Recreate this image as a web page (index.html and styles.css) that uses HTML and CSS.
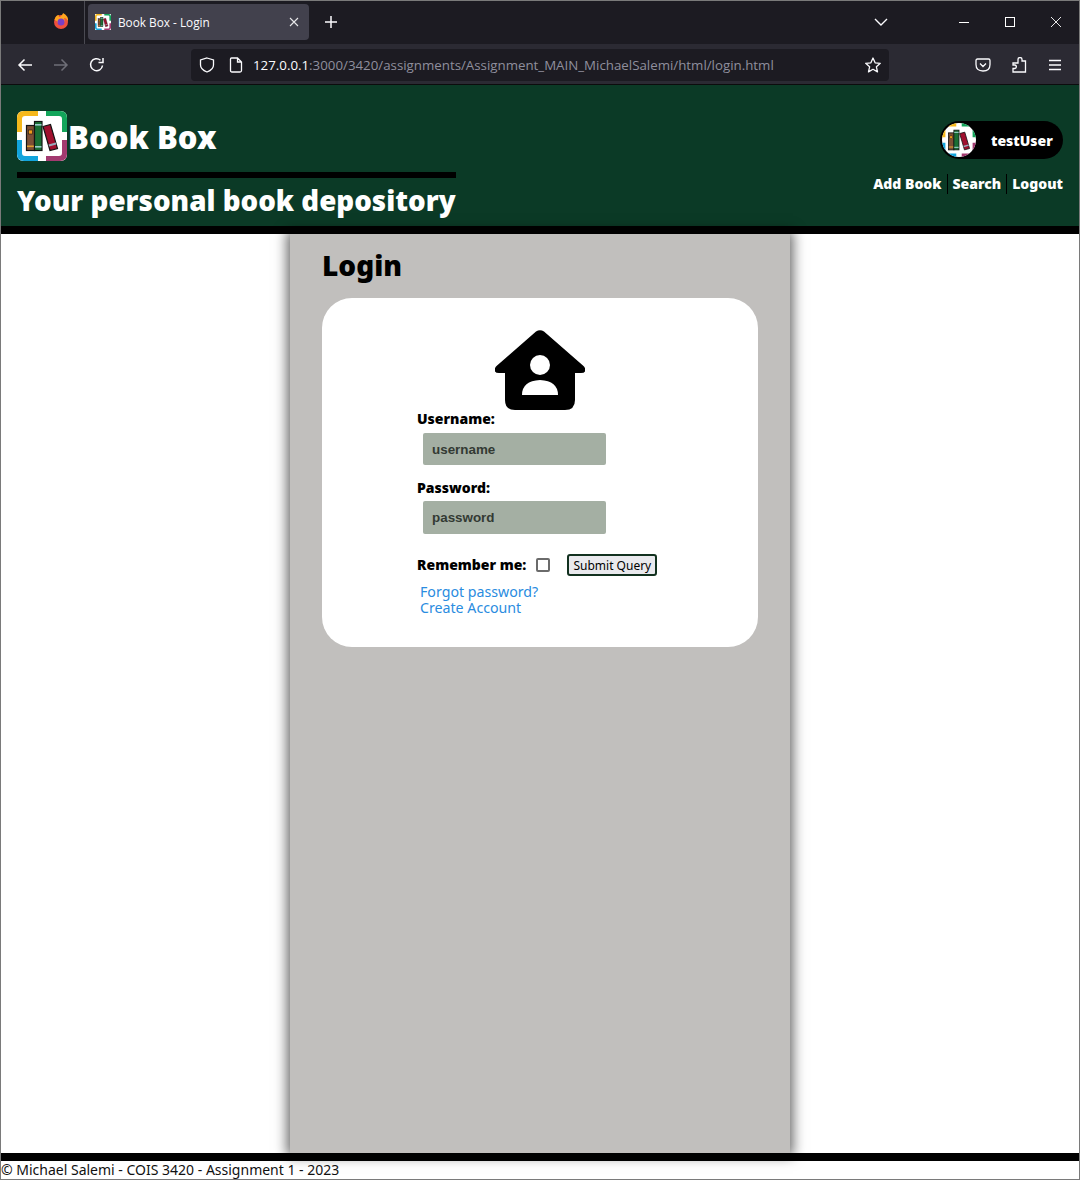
FILE: index.html
```html
<!DOCTYPE html>
<html lang="en">
<head>
  <meta charset="UTF-8">
  <meta name="viewport" content="width=device-width, initial-scale=1.0">
  <title>Book Box - Login</title>
  <link rel="stylesheet" href="styles.css">
</head>
<body>
  <svg class="defs" width="0" height="0">
    <symbol id="books" viewBox="0 0 50 50">
      <rect x="9.500" y="14.500" width="8" height="25" fill="#7d4f35" stroke="#141414" stroke-width="1.200"/>
      <rect x="11.500" y="19" width="4" height="4" fill="#f09a1a" stroke="#141414" stroke-width=".6"/>
      <rect x="10" y="34.500" width="7" height="1.600" fill="#e0a030"/>
      <rect x="17.500" y="10.500" width="7.500" height="29" fill="#1a6e34" stroke="#141414" stroke-width="1.200"/>
      <rect x="18" y="13" width="6.500" height="1.600" fill="#9cc"/>
      <rect x="18" y="35" width="6.500" height="1.600" fill="#9cc"/>
      <path d="M26 15.500 L33.500 13.500 L40.500 37.500 L33 39.500 Z" fill="#a0102e" stroke="#141414" stroke-width="1.200"/>
      <path d="M31.500 33.500 L38.800 31.500 L39.400 33.500 L32.100 35.500 Z" fill="#9ab"/>
    </symbol>
    <symbol id="colours" viewBox="0 0 50 50">
      <path d="M5 21 V8 Q5 5 8 5 H21 V0 H7 Q0 0 0 7 V21 Z" fill="#f5b81c"/>
      <path d="M29 5 H42 Q45 5 45 8 V21 H50 V7 Q50 0 43 0 H29 Z" fill="#12a55a"/>
      <path d="M5 29 V42 Q5 45 8 45 H21 V50 H7 Q0 50 0 43 V29 Z" fill="#12a4dc"/>
      <path d="M29 45 H42 Q45 45 45 42 V29 H50 V43 Q50 50 43 50 H29 Z" fill="#a33a70"/>
    </symbol>
  </svg>

  <div class="tabbar">
    <div class="tab-left">
      <svg class="ffox" viewBox="0 0 16 16" width="16" height="16">
        <circle cx="8" cy="9" r="7" fill="#f0503c"/>
        <path d="M1.500 7 Q2.500 2 6 2 Q5 4 7 4 Q10 1 10 0 Q16 3 15 9 Q14 5 11 5 Q13 9 9 11 Q5 12 4 8 Z" fill="#ffa51e"/>
        <circle cx="8" cy="9" r="3.500" fill="#7b3fc4"/>
      </svg>
    </div>
    <div class="tab">
      <svg class="tab-favicon" width="16" height="16" viewBox="0 0 50 50"><rect width="50" height="50" fill="#fff"/><use href="#colours" width="50" height="50"/><use href="#books" width="50" height="50"/></svg>
      <span class="tab-title">Book Box - Login</span>
      <svg class="icon-sm" viewBox="0 0 10 10" width="10" height="10"><path d="M1 1 L9 9 M9 1 L1 9" stroke="#e8e8ea" stroke-width="1.100"/></svg>
    </div>
    <svg class="newtab" viewBox="0 0 14 14" width="14" height="14"><path d="M7 1 V13 M1 7 H13" stroke="#fbfbfe" stroke-width="1.500"/></svg>
    <div class="spacer"></div>
    <svg class="tab-list" viewBox="0 0 14 8" width="14" height="8"><path d="M1 1 L7 7 L13 1" fill="none" stroke="#fbfbfe" stroke-width="1.400"/></svg>
    <div class="winbtn"><svg viewBox="0 0 10 10" width="10" height="10"><path d="M0 5.500 H10" stroke="#fff"/></svg></div>
    <div class="winbtn"><svg viewBox="0 0 10 10" width="10" height="10"><rect x=".5" y=".5" width="9" height="9" fill="none" stroke="#fff"/></svg></div>
    <div class="winbtn"><svg viewBox="0 0 10 10" width="10" height="10"><path d="M0 0 L10 10 M10 0 L0 10" stroke="#fff" stroke-width=".9"/></svg></div>
  </div>

  <div class="toolbar">
    <svg class="nav-first" viewBox="0 0 16 16" width="16" height="16"><path d="M15 8 H2 M7.500 2.500 L2 8 L7.500 13.500" fill="none" stroke="#fbfbfe" stroke-width="1.500"/></svg>
    <svg class="nav" viewBox="0 0 16 16" width="16" height="16"><path d="M1 8 H14 M8.500 2.500 L14 8 L8.500 13.500" fill="none" stroke="#6f6f78" stroke-width="1.500"/></svg>
    <svg class="nav" viewBox="0 0 16 16" width="16" height="16"><path d="M13.500 8.500 A6 6 0 1 1 11.500 3.200 M14 1 V5.500 H9.500" fill="none" stroke="#fbfbfe" stroke-width="1.500"/></svg>
    <div class="urlbar">
      <svg viewBox="0 0 16 16" width="16" height="16"><path d="M8 1 L14.500 3 V8 Q14.500 12.500 8 15 Q1.500 12.500 1.500 8 V3 Z" fill="none" stroke="#fbfbfe" stroke-width="1.300"/></svg>
      <svg class="page-icon" viewBox="0 0 14 16" width="14" height="16"><path d="M2.500 1 H8.500 L12.500 5 V13.500 Q12.500 15 11 15 H3 Q1.500 15 1.500 13.500 V2 Q1.500 1 2.500 1 Z M8.500 1 V5 H12.500" fill="none" stroke="#fbfbfe" stroke-width="1.300"/></svg>
      <span class="url"><span class="url-host">127.0.0.1</span>:3000/3420/assignments/Assignment_MAIN_MichaelSalemi/html/login.html</span>
      <svg class="star" viewBox="0 0 16 16" width="16" height="16"><path d="M8 1 L10.100 5.800 L15.300 6.300 L11.400 9.800 L12.500 14.900 L8 12.300 L3.500 14.900 L4.600 9.800 L.7 6.300 L5.900 5.800 Z" fill="none" stroke="#fbfbfe" stroke-width="1.300" stroke-linejoin="round"/></svg>
    </div>
    <svg class="tool-first" viewBox="0 0 16 16" width="16" height="16"><path d="M2.500 2 H13.500 Q15 2 15 3.500 V7.500 Q15 14 8 14 Q1 14 1 7.500 V3.500 Q1 2 2.500 2 Z M5 6.500 L8 9.500 L11 6.500" fill="none" stroke="#fbfbfe" stroke-width="1.300"/></svg>
    <svg class="tool" viewBox="0 0 16 16" width="16" height="16"><path d="M7 4 V2.500 A2 2 0 0 1 11 2.500 V4 H14.500 V15 H2 V11.500 H4 A1.800 1.800 0 0 0 4 8 H2 V6 H7 Z" fill="none" stroke="#fbfbfe" stroke-width="1.300"/></svg>
    <svg class="tool" viewBox="0 0 16 16" width="16" height="16"><path d="M2 3.500 H14 M2 8 H14 M2 12.500 H14" stroke="#fbfbfe" stroke-width="1.300"/></svg>
  </div>

  <header class="site-header">
    <div class="brand">
      <div class="brand-top">
        <svg class="logo" width="50" height="50" viewBox="0 0 50 50"><rect width="50" height="50" rx="6" fill="#fff"/><use href="#colours" width="50" height="50"/><use href="#books" width="50" height="50"/></svg>
        <h1 class="brand-name">Book Box</h1>
      </div>
      <h2 class="tagline">Your personal book depository</h2>
    </div>
    <div class="user-area">
      <div class="user-pill">
        <svg class="avatar" width="34" height="34" viewBox="0 0 50 50"><rect width="50" height="50" fill="#fff"/><use href="#colours" width="50" height="50"/><use href="#books" width="50" height="50"/></svg>
        <span>testUser</span>
      </div>
      <nav class="site-nav">
        <a href="#">Add Book</a>
        <a href="#">Search</a>
        <a href="#">Logout</a>
      </nav>
    </div>
  </header>

  <div class="page">
    <main class="column">
      <h2 class="page-title">Login</h2>
      <div class="card">
        <form class="login-form" action="#" onsubmit="return false;">
          <svg class="house" viewBox="0 0 90 80" width="90" height="80">
            <path d="M41 1.500 Q45 -1 49 1.500 L88.500 36 Q91.500 39.500 90 41.500 Q89 43 86 43 H80 V70 Q80 80 70 80 H20 Q10 80 10 70 V43 H4 Q1 43 0 41.500 Q-1.500 39.500 1.500 36 Z" fill="#000"/>
            <circle cx="45" cy="35" r="10" fill="#fff"/>
            <path d="M27 65 Q27 51 45 50 Q63 51 63 65 Z" fill="#fff"/>
          </svg>
          <label class="field-label" for="username">Username:</label>
          <input class="field" type="text" id="username" placeholder="username">
          <label class="field-label" for="password">Password:</label>
          <input class="field field-tall" type="password" id="password" placeholder="password">
          <div class="remember">
            <label class="field-label" for="remember">Remember me:</label>
            <input class="check" type="checkbox" id="remember">
            <input class="submit" type="submit" value="Submit Query">
          </div>
          <div class="form-links">
            <a href="#">Forgot password?</a>
            <a href="#">Create Account</a>
          </div>
        </form>
      </div>
    </main>
  </div>

  <footer class="site-footer">© Michael Salemi - COIS 3420 - Assignment 1 - 2023</footer>
</body>
</html>
```

FILE: styles.css
```css
* {
  box-sizing: border-box;
}

html, body {
  height: 100%;
}

body {
  margin: 0;
  display: flex;
  flex-direction: column;
  height: 1180px;
  border: 1px solid #7a7a7a;
  background: #fff;
  font-family: "Noto Sans", sans-serif;
  overflow: hidden;
}

.defs {
  position: absolute;
}

/* browser chrome */
.tabbar {
  height: 43px;
  padding-bottom: 2px;
  background: #1c1b22;
  display: flex;
  align-items: center;
  flex: none;
}

.tab-left {
  width: 84px;
  height: 43px;
  margin-bottom: -2px;
  padding-bottom: 2px;
  border-right: 1px solid #4a4a52;
  display: flex;
  align-items: center;
  padding-left: 52px;
}

.ffox {
  margin-top: -1px;
}

.tab {
  width: 221px;
  height: 36px;
  margin-left: 3px;
  background: #42414d;
  border-radius: 4px;
  display: flex;
  align-items: center;
  padding: 0 10px 0 7px;
  color: #fbfbfe;
  font-family: "Open Sans", sans-serif;
  font-size: 11.800px;
}

.tab-favicon {
  flex: none;
}

.tab-title {
  flex: 1;
  margin-left: 7px;
}

.newtab {
  margin-left: 15px;
}

.spacer {
  flex: 1;
}

.tab-list {
  margin-right: 53px;
}

.winbtn {
  width: 46px;
  display: flex;
  justify-content: center;
}

.toolbar {
  height: 41px;
  padding-top: 1px;
  background: #2b2a33;
  border-bottom: 1px solid #0c0c0d;
  display: flex;
  align-items: center;
  flex: none;
}

.nav-first {
  margin-left: 16px;
}

.nav {
  margin-left: 20px;
}

.urlbar {
  width: 698px;
  height: 32px;
  margin-left: 86px;
  background: #1c1b22;
  border-radius: 4px;
  display: flex;
  align-items: center;
  padding: 0 8px;
  color: #8f8f9d;
  font-family: "Open Sans", sans-serif;
  font-size: 13.300px;
}

.page-icon {
  margin-left: 14px;
}

.url {
  margin-left: 10px;
  flex: 1;
  white-space: nowrap;
}

.url-host {
  color: #fbfbfe;
}

.tool-first {
  margin-left: 86px;
}

.tool {
  margin-left: 20px;
}

/* site header */
.site-header {
  height: 149px;
  flex: none;
  background: #0b3a26;
  border-bottom: 8px solid #000;
  display: flex;
  justify-content: space-between;
  padding: 26px 16px 0 16px;
  color: #fff;
}

.brand-top {
  display: flex;
  align-items: center;
  height: 50px;
}

.logo {
  flex: none;
}

.brand-name {
  margin: 0 0 0 1px;
  padding-top: 1px;
  font-size: 31px;
  font-weight: 900;
  line-height: 50px;
}

.tagline {
  margin: 11px 0 0;
  padding-top: 1px;
  border-top: 6px solid #000;
  font-size: 27.750px;
  font-weight: 900;
  line-height: 42px;
  white-space: nowrap;
}

.user-area {
  display: flex;
  flex-direction: column;
  align-items: flex-end;
  padding-top: 10px;
}

.user-pill {
  width: 123px;
  height: 38px;
  background: #000;
  border-radius: 19px;
  display: flex;
  align-items: center;
  padding-left: 2px;
  font-size: 14px;
  font-weight: 900;
}

.avatar {
  flex: none;
  border-radius: 50%;
}

.user-pill span {
  margin-left: 15px;
}

.site-nav {
  display: flex;
  margin-top: 15px;
  font-size: 14px;
  font-weight: 900;
  line-height: 20px;
}

.site-nav a {
  color: #fff;
  text-decoration: none;
  padding: 0 5px;
  border-right: 1px solid #000;
}

.site-nav a:last-child {
  border-right: 0;
  padding-right: 0;
}

/* main */
.page {
  flex: 1;
  display: flex;
  justify-content: center;
  min-height: 0;
}

.column {
  width: 500px;
  background: #c1bfbd;
  box-shadow: 0 0 12px 3px rgba(0, 0, 0, .6);
  padding: 0 32px;
}

.page-title {
  margin: 0 0 2px;
  font-size: 28px;
  font-weight: 900;
  line-height: 62px;
}

.card {
  background: #fff;
  border-radius: 30px;
  height: 349px;
  padding-top: 32px;
  display: flex;
  justify-content: center;
}

.login-form {
  width: 246px;
  display: flex;
  flex-direction: column;
  align-items: flex-start;
}

.house {
  align-self: center;
  display: block;
  flex: none;
}

.field-label {
  margin-top: -1px;
  font-size: 14px;
  font-weight: 900;
  line-height: 19px;
  color: #000;
  white-space: nowrap;
}

.field + .field-label {
  margin: 0 0 -1px;
}

.field {
  width: 183px;
  height: 32px;
  margin: 5px 0 13px 6px;
  padding: 0 9px;
  border: 0;
  border-radius: 2px;
  background: #a4afa3;
  font-family: "Liberation Sans", sans-serif;
  font-size: 13.400px;
  font-weight: 700;
}

.field-tall {
  height: 33px;
}

.field::placeholder {
  color: #333a33;
  opacity: 1;
}

.remember {
  display: flex;
  align-items: center;
  margin-top: 7px;
}

.check {
  appearance: none;
  width: 14px;
  height: 14px;
  margin: 0 0 0 10px;
  border: 2px solid #6b6b6b;
  border-radius: 2px;
  background: #fff;
}

.submit {
  height: 22px;
  width: 90px;
  margin-left: 17px;
  padding: 0;
  border: 2px solid #12311f;
  border-radius: 3px;
  background: #e9e9ed;
  color: #000;
  font-family: "Noto Sans", sans-serif;
  font-size: 12px;
}

.form-links {
  display: flex;
  flex-direction: column;
  margin: 8px 0 0 3px;
  font-size: 14.200px;
  line-height: 16px;
}

.form-links a {
  color: #2a8ce0;
  text-decoration: none;
}

/* footer */
.site-footer {
  flex: none;
  height: 26px;
  border-top: 8px solid #000;
  font-size: 14px;
  line-height: 18px;
  color: #111;
}
```
